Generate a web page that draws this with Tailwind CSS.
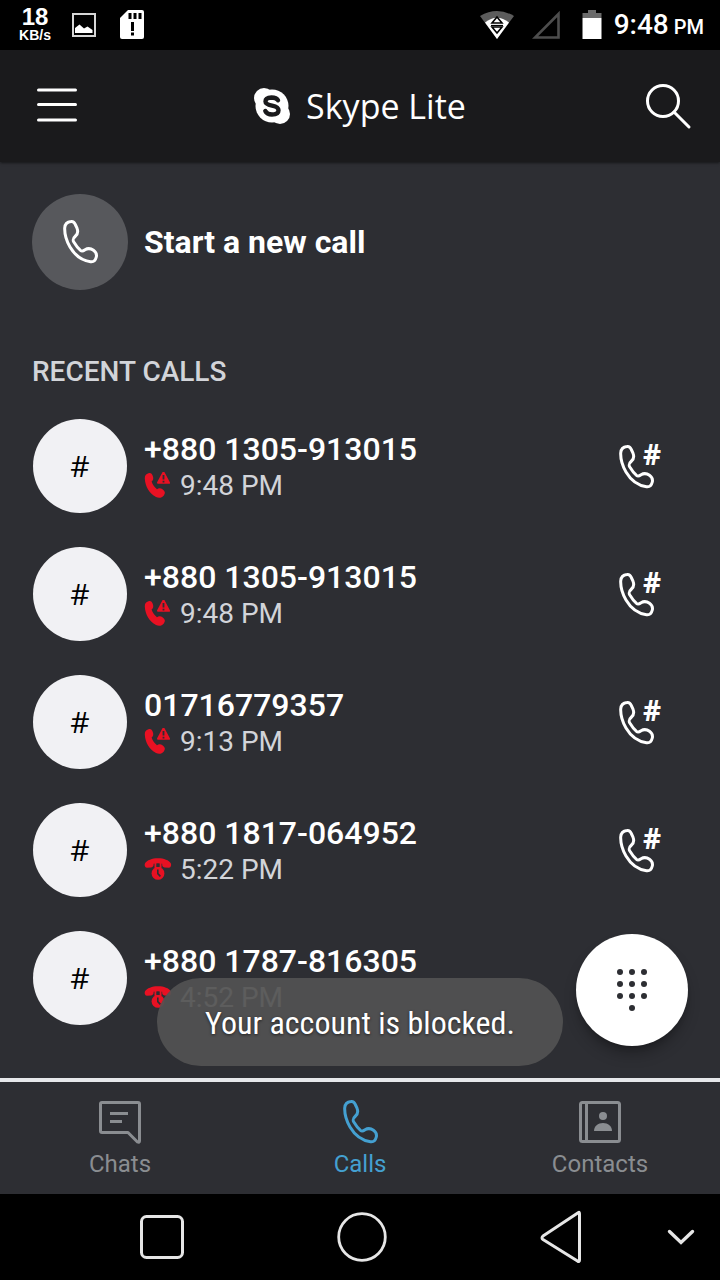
<!DOCTYPE html>
<html lang="en">
<head>
  <meta charset="UTF-8">
  <meta name="viewport" content="width=device-width, initial-scale=1.0">
  <title>Skype Lite - Calls</title>
  <script src="https://cdn.jsdelivr.net/npm/@tailwindcss/browser@4"></script>
</head>
<body class="bg-black">
  <!-- Shared icons -->
  <svg class="hidden" aria-hidden="true">
    <symbol id="phone" viewBox="-1 0 36 44">
      <path fill="none" stroke="currentColor" stroke-width="3" stroke-linejoin="round" d="M8 1.6C10.3 1.3 11.4 2.4 12.3 4.5L14 8.2C15.5 12 14.8 14 12.5 16C9.6 18.6 9.5 19.7 10.8 22C12.8 25.3 15 28.3 17.5 30.4C19 31.6 20 31.2 22 29.7C25 28 28 28.5 30.5 30.3C32.8 32 33.9 34.5 33.3 37C32.6 40 30.5 42.1 27.5 41.7C20 40.7 12 35.5 7 27C3 20 1.5 14 1.7 8C2 4 4 2 8 1.6Z"/>
    </symbol>
    <symbol id="phone-number" viewBox="0 0 46 46">
      <use href="#phone" x="0" y="2" width="36" height="44"/>
      <text x="25" y="22" font-family="Open Sans, sans-serif" font-weight="700" font-size="28" fill="currentColor">#</text>
    </symbol>
    <symbol id="call-failed" viewBox="0 0 28 28">
      <path fill="#e81123" d="M4.5 1.2C6.8.5 8 1.8 8.8 4C9.7 6.5 9.3 8.2 7.6 9.6C8.6 12.8 10.4 15.3 13 17.2C14.8 16 16.8 16 18.8 17.6C21.4 19.6 21.4 21.500 19.8 23.4C17.8 26 14.8 26.4 12 25C5.4 21.6 1.200 14.4.8 6.500C.7 3.500 2 1.8 4.500 1.2Z"/>
      <path fill="#e81123" stroke="#e81123" stroke-width="2" stroke-linejoin="round" d="M19.500 .4L25 10.800H14Z"/>
      <path stroke="#2d2e33" stroke-width="1.8" d="M19.500 3v4.600M19.500 8.800v1.800"/>
    </symbol>
    <symbol id="call-missed" viewBox="0 0 28 28">
      <path fill="#e81123" d="M14 2.2C20 2.2 25 4.2 26.8 7.2C27.6 9.2 27 11.2 25 11.8L20.6 11.6C18.6 11.2 18 10 18.2 7.8C15.4 7 12.4 7 9.6 7.8C9.8 10 9 11.2 7.2 11.6L2.8 11.8C.8 11.2.2 9.2 1 7.2C3 4.2 8 2.2 14 2.2Z"/>
      <path fill="#e81123" d="M10.500 7h1.800v4h3.400V7h1.800v5h-7z"/>
      <circle cx="14" cy="17.400" r="6.400" fill="#e81123"/>
      <path fill="none" stroke="#2d2e33" stroke-width="1.6" d="M13.8 13.4V17.6L16.4 20.4"/>
    </symbol>
  </svg>

  <div class="flex min-h-screen flex-col bg-[#2d2e33] font-[Roboto,sans-serif] text-white">

    <!-- Status bar -->
    <div class="flex h-[50px] items-center justify-between bg-black px-4">
      <div class="flex items-center gap-5">
        <div class="flex w-[38px] flex-col items-center font-['Liberation_Sans',sans-serif]">
          <span class="text-2xl leading-5 font-semibold">18</span>
          <span class="text-sm leading-4 font-bold">KB/s</span>
        </div>
        <svg class="-ml-0.5 h-6 w-6" viewBox="0 0 24 24">
          <rect x="1" y="1" width="22" height="22" fill="none" stroke="#d6d6d6" stroke-width="2"/>
          <path fill="#fff" d="M3 20V15L7.500 11.500L12 15.500L15.500 13.500L20.500 17V20Z"/>
        </svg>
        <svg class="ml-1 h-[30px] w-6" viewBox="0 0 24 30">
          <path fill="#fff" d="M8 0H22Q24 0 24 2V27Q24 29 22 29H2Q0 29 0 27V8Z"/>
          <path stroke="#000" stroke-width="3" d="M10 3v6M15 3v6M20 3v6"/>
          <path stroke="#000" stroke-width="3" d="M12.500 12v9M12.500 22.500v3"/>
        </svg>
      </div>
      <div class="flex items-center">
        <svg class="h-[30px] w-[34px]" viewBox="0 0 34 30">
          <path fill="#5c5c5c" d="M0 6Q17-4 34 6L17 29Z"/>
          <path fill="#fff" d="M5 12.500Q17 3 29 12.500L17 29Z"/>
          <path fill="#fff" stroke="#000" stroke-width="1.600" d="M17 7L22 13H12ZM12 17H22L17 23Z"/>
          <path stroke="#000" stroke-width="1.200" d="M11 15.500H23"/>
        </svg>
        <svg class="ml-[18px] h-[30px] w-[30px]" viewBox="0 0 30 30">
          <path fill="none" stroke="#4d4d4d" stroke-width="2.600" d="M3 27.500H26.500V4Z"/>
        </svg>
        <svg class="ml-5 h-[30px] w-5" viewBox="0 0 20 30">
          <path fill="#6b6b6b" d="M6 0H14V3H19.500V8H.5V3H6Z"/>
          <path fill="#fff" d="M.5 8H19.500V29H.5Z"/>
        </svg>
        <span class="ml-3 text-[28px] leading-8 font-medium">9:48 <span class="-ml-0.5 text-xl">PM</span></span>
      </div>
    </div>

    <!-- App header -->
    <header class="z-10 grid h-28 grid-cols-[1fr_auto_1fr] items-center bg-[#1a1a1c] px-7 shadow-sm shadow-black/40">
      <button type="button" aria-label="Menu" class="ml-2 w-11">
        <svg class="h-9 w-11" viewBox="0 0 44 36" fill="none" stroke="#fff" stroke-width="3" stroke-linecap="round">
          <path d="M2.500 2H39.500M2.500 16.500H39.500M2.500 32H39.500"/>
        </svg>
      </button>
      <div class="flex items-center gap-4">
        <svg class="h-9 w-9" viewBox="0 0 36 36">
          <circle cx="18" cy="18" r="16.500" fill="#fff"/>
          <circle cx="10" cy="10" r="10" fill="#fff"/>
          <circle cx="26" cy="26" r="10" fill="#fff"/>
          <path fill="none" stroke="#1a1a1c" stroke-width="4.400" stroke-linecap="round" d="M24 12.300C22.500 9.500 19.500 9.500 17.500 9.500C13.500 9.600 11.500 11.300 11.500 13.500C11.500 16 14 16.800 18 17.700C22.500 18.700 24.500 19.800 24.500 22.200C24.500 25 22 26.500 18 26.500C14.500 26.500 12.500 25.500 11.300 23"/>
        </svg>
        <h1 class="font-['Open_Sans','Noto_Sans',sans-serif] text-[34px] leading-10 font-normal">Skype Lite</h1>
      </div>
      <button type="button" aria-label="Search" class="justify-self-end">
        <svg class="h-12 w-12" viewBox="0 0 48 48" fill="none" stroke="#fff" stroke-width="3" stroke-linecap="round">
          <circle cx="19" cy="19" r="15.500"/>
          <path d="M30 30L45 45"/>
        </svg>
      </button>
    </header>

    <main class="relative flex-1 px-8 pt-8">
      <button type="button" class="flex items-center gap-4">
        <span class="flex h-24 w-24 items-center justify-center rounded-full bg-[#57585c]">
          <svg class="h-11 w-9"><use href="#phone"/></svg>
        </span>
        <span class="text-[32px] leading-10 font-bold">Start a new call</span>
      </button>

      <h2 class="mt-16 text-[28px] leading-9 font-medium text-[#d2d4d9]">RECENT CALLS</h2>

      <ul class="mt-3">
        <li class="flex h-32 items-center">
          <div class="mx-px flex h-[94px] w-[94px] items-center justify-center rounded-full bg-[#f1f1f4] pb-0.5 font-['Open_Sans',sans-serif] text-[30px] text-black">#</div>
          <div class="ml-4 flex-1 pt-1">
            <p class="text-[32px] leading-9 font-medium">+880 1305-913015</p>
            <p class="flex items-center gap-2 text-[28px] leading-[38px] text-[#d2d4d9]"><svg class="h-7 w-7"><use href="#call-failed"/></svg>9:48 PM</p>
          </div>
          <button type="button" aria-label="Call +880 1305-913015" class="mr-6"><svg class="h-[46px] w-[46px]"><use href="#phone-number"/></svg></button>
        </li>
        <li class="flex h-32 items-center">
          <div class="mx-px flex h-[94px] w-[94px] items-center justify-center rounded-full bg-[#f1f1f4] pb-0.5 font-['Open_Sans',sans-serif] text-[30px] text-black">#</div>
          <div class="ml-4 flex-1 pt-1">
            <p class="text-[32px] leading-9 font-medium">+880 1305-913015</p>
            <p class="flex items-center gap-2 text-[28px] leading-[38px] text-[#d2d4d9]"><svg class="h-7 w-7"><use href="#call-failed"/></svg>9:48 PM</p>
          </div>
          <button type="button" aria-label="Call +880 1305-913015" class="mr-6"><svg class="h-[46px] w-[46px]"><use href="#phone-number"/></svg></button>
        </li>
        <li class="flex h-32 items-center">
          <div class="mx-px flex h-[94px] w-[94px] items-center justify-center rounded-full bg-[#f1f1f4] pb-0.5 font-['Open_Sans',sans-serif] text-[30px] text-black">#</div>
          <div class="ml-4 flex-1 pt-1">
            <p class="text-[32px] leading-9 font-medium">01716779357</p>
            <p class="flex items-center gap-2 text-[28px] leading-[38px] text-[#d2d4d9]"><svg class="h-7 w-7"><use href="#call-failed"/></svg>9:13 PM</p>
          </div>
          <button type="button" aria-label="Call 01716779357" class="mr-6"><svg class="h-[46px] w-[46px]"><use href="#phone-number"/></svg></button>
        </li>
        <li class="flex h-32 items-center">
          <div class="mx-px flex h-[94px] w-[94px] items-center justify-center rounded-full bg-[#f1f1f4] pb-0.5 font-['Open_Sans',sans-serif] text-[30px] text-black">#</div>
          <div class="ml-4 flex-1 pt-1">
            <p class="text-[32px] leading-9 font-medium">+880 1817-064952</p>
            <p class="flex items-center gap-2 text-[28px] leading-[38px] text-[#d2d4d9]"><svg class="h-7 w-7"><use href="#call-missed"/></svg>5:22 PM</p>
          </div>
          <button type="button" aria-label="Call +880 1817-064952" class="mr-6"><svg class="h-[46px] w-[46px]"><use href="#phone-number"/></svg></button>
        </li>
        <li class="flex h-32 items-center">
          <div class="mx-px flex h-[94px] w-[94px] items-center justify-center rounded-full bg-[#f1f1f4] pb-0.5 font-['Open_Sans',sans-serif] text-[30px] text-black">#</div>
          <div class="ml-4 flex-1 pt-1">
            <p class="text-[32px] leading-9 font-medium">+880 1787-816305</p>
            <p class="flex items-center gap-2 text-[28px] leading-[38px] text-[#d2d4d9]"><svg class="h-7 w-7"><use href="#call-missed"/></svg>4:52 PM</p>
          </div>
        </li>
      </ul>

      <!-- Dial pad button -->
      <button type="button" aria-label="Dial pad" class="absolute right-8 bottom-8 flex h-28 w-28 items-center justify-center rounded-full bg-white shadow-lg shadow-black/30">
        <svg class="h-11 w-8" viewBox="0 0 32 44" fill="#2d2e33">
          <circle cx="4" cy="4" r="3"/><circle cx="16" cy="4" r="3"/><circle cx="28" cy="4" r="3"/>
          <circle cx="4" cy="16" r="3"/><circle cx="16" cy="16" r="3"/><circle cx="28" cy="16" r="3"/>
          <circle cx="4" cy="28" r="3"/><circle cx="16" cy="28" r="3"/><circle cx="28" cy="28" r="3"/>
          <circle cx="16" cy="40" r="3"/>
        </svg>
      </button>

      <!-- Toast -->
      <div class="pointer-events-none absolute inset-x-0 bottom-3 flex justify-center">
        <p role="status" class="flex h-[88px] items-center rounded-full bg-[#525252]/92 px-12 pt-0.5 font-['Roboto_Condensed',Roboto,sans-serif] text-[32px] [text-shadow:0_1px_3px_#0009]">Your account is blocked.</p>
      </div>
    </main>

    <!-- Tabs -->
    <nav class="grid h-[116px] grid-cols-3 border-t-4 border-[#e6e8eb] text-2xl leading-8 text-[#8a8d91]">
      <a href="#chats" class="flex flex-col items-center gap-1 pt-[18px]">
        <svg class="h-11 w-11" viewBox="0 0 44 44" fill="none" stroke="currentColor" stroke-width="3" stroke-linejoin="round">
          <path d="M4 2.500H40Q41.500 2.500 41.500 4V41Q41.500 43 39.500 42L30 32.500H4Q2.500 32.500 2.500 31V4Q2.500 2.500 4 2.500Z"/>
          <path d="M12 13.500H30M12 21.500H24"/>
        </svg>
        Chats
      </a>
      <a href="#calls" aria-current="page" class="flex flex-col items-center gap-1 pt-[18px] text-[#44a0d1]">
        <svg class="h-11 w-9"><use href="#phone"/></svg>
        Calls
      </a>
      <a href="#contacts" class="flex flex-col items-center gap-1 pt-[18px]">
        <svg class="h-11 w-11" viewBox="0 0 44 44" fill="none" stroke="currentColor" stroke-width="3">
          <rect x="2.500" y="2.500" width="39" height="39" rx="2"/>
          <path d="M8.500 2.500V41.500"/>
          <circle cx="25" cy="16" r="4" fill="currentColor" stroke="none"/>
          <path fill="currentColor" stroke="none" d="M16 31C16 26 20 23 25 23S34 26 34 31Z"/>
        </svg>
        Contacts
      </a>
    </nav>

    <!-- System navigation -->
    <div class="grid h-[86px] grid-cols-[7fr_7fr_7fr_2fr] items-center bg-black pl-[62px]">
      <button type="button" aria-label="Recent apps" class="justify-self-center">
        <svg class="h-11 w-11" viewBox="0 0 44 44" fill="none" stroke="#e6e6e6" stroke-width="3"><rect x="1.500" y="1.500" width="41" height="41" rx="5"/></svg>
      </button>
      <button type="button" aria-label="Home" class="justify-self-center">
        <svg class="h-[50px] w-[50px]" viewBox="0 0 50 50" fill="none" stroke="#e6e6e6" stroke-width="2.800"><circle cx="25" cy="25" r="23.300"/></svg>
      </button>
      <button type="button" aria-label="Back" class="mr-1 justify-self-center">
        <svg class="h-[54px] w-[42px]" viewBox="0 0 42 54" fill="none" stroke="#e6e6e6" stroke-width="3" stroke-linejoin="round"><path d="M38.500 2.500Q39.500 2 39.500 4V50Q39.500 52.500 37.500 51L3 29.500Q1 28 3 26Z"/></svg>
      </button>
      <button type="button" aria-label="Hide navigation" class="ml-1">
        <svg class="h-4 w-7" viewBox="0 0 28 16" fill="none" stroke="#e6e6e6" stroke-width="3.400" stroke-linecap="round"><path d="M2.500 2.500L14 13.500L25.500 2.500"/></svg>
      </button>
    </div>
  </div>
</body>
</html>
